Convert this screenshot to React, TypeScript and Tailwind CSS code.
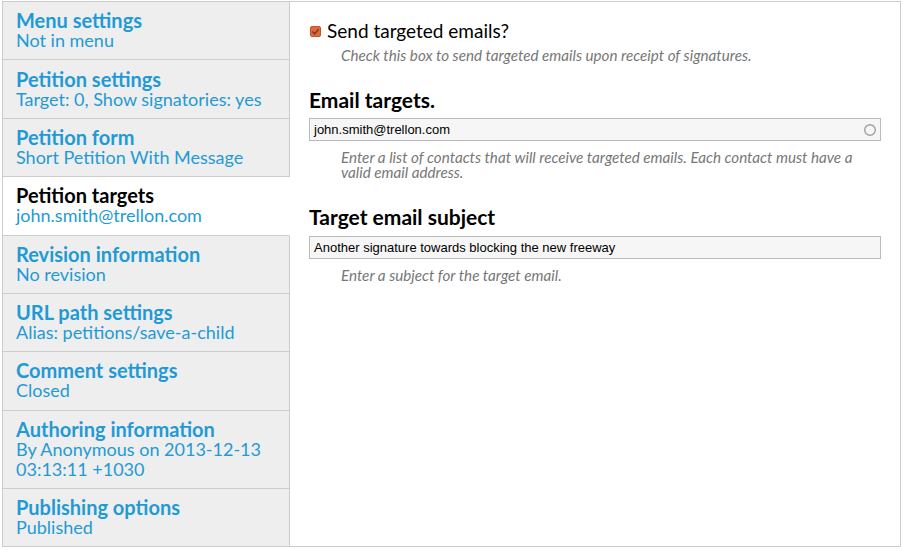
import React from "react";

const items = [
  { t: "Menu settings", s: ["Not in menu"] },
  { t: "Petition settings", s: ["Target: 0, Show signatories: yes"] },
  { t: "Petition form", s: ["Short Petition With Message"] },
  { t: "Petition targets", s: ["john.smith@trellon.com"], active: true },
  { t: "Revision information", s: ["No revision"] },
  { t: "URL path settings", s: ["Alias: petitions/save-a-child"] },
  { t: "Comment settings", s: ["Closed"] },
  { t: "Authoring information", s: ["By Anonymous on 2013-12-13", "03:13:11 +1030"] },
  { t: "Publishing options", s: ["Published"] },
];

export default function App() {
  return (
    <div className="w-[903px] h-[550px] bg-white pt-[1px] pl-[2px]" style={{ fontFamily: "Lato, 'Open Sans', sans-serif" }}>
      <div className="w-[899px] flex border border-[#cccccc]">
        <div className="w-[287px] flex flex-col bg-[#eeeeee]">
          {items.map((it, i) => (
            <div
              key={i}
              className={
                "pl-[13px] py-[9.2px] " +
                (i < items.length - 1 ? "border-b border-[#cccccc] " : "") +
                (it.active ? "bg-white border-r border-r-white" : "border-r border-r-[#cccccc]")
              }
            >
              <div className={"text-[20px] leading-[19px] font-bold " + (it.active ? "text-black" : "text-[#1f9ad6]")}>{it.t}</div>
              {it.s.map((l, j) => (
                <div key={j} className="text-[18px] leading-[20px] text-[#1f9ad6]">{l}</div>
              ))}
            </div>
          ))}
        </div>
        <div className="flex-1 pl-[19px] pr-[19px] pt-[17px]">
          <div className="flex items-center h-[24px]">
            <span className="relative w-[11px] h-[11px] rounded-[2px] bg-[#e0683f] border border-[#c4532c] mr-[6px] ml-[1px]">
              <svg viewBox="0 0 11 11" className="absolute left-[-1px] top-[-1px] w-[11px] h-[11px]">
                <path d="M2.5 5.5 L4.6 7.8 L8.6 3.2" fill="none" stroke="#7a3a22" strokeWidth="1.5" />
              </svg>
            </span>
            <span className="text-[19px] text-black leading-[24px]">Send targeted emails?</span>
          </div>
          <div className="ml-[32px] mt-[3px] text-[15.2px] italic text-[#777777] leading-[18px]">
            Check this box to send targeted emails upon receipt of signatures.
          </div>
          <div className="mt-[24px] text-[21px] font-bold text-black leading-[24px]">Email targets.</div>
          <div className="mt-[6px] h-[23px] border border-[#bbbbbb] bg-[#f6f6f6] flex items-center justify-between pl-[4px] pr-[3px]">
            <span className="text-[13px] text-black" style={{ fontFamily: "'Liberation Sans', Arial, sans-serif" }}>john.smith@trellon.com</span>
            <svg width="14" height="14" viewBox="0 0 14 14">
              <circle cx="7" cy="7" r="5.3" fill="none" stroke="#a0a0a0" strokeWidth="1.4" />
            </svg>
          </div>
          <div className="ml-[32px] mt-[9px] text-[15.2px] italic text-[#777777] leading-[15px] pr-[20px]">
            Enter a list of contacts that will receive targeted emails. Each contact must have a valid email address.
          </div>
          <div className="mt-[25px] text-[21px] font-bold text-black leading-[24px]">Target email subject</div>
          <div className="mt-[7px] h-[23px] border border-[#bbbbbb] bg-[#f6f6f6] flex items-center pl-[4px]">
            <span className="text-[13px] text-black" style={{ fontFamily: "'Liberation Sans', Arial, sans-serif" }}>Another signature towards blocking the new freeway</span>
          </div>
          <div className="ml-[32px] mt-[7px] text-[15.2px] italic text-[#777777] leading-[18px]">
            Enter a subject for the target email.
          </div>
        </div>
      </div>
    </div>
  );
}
